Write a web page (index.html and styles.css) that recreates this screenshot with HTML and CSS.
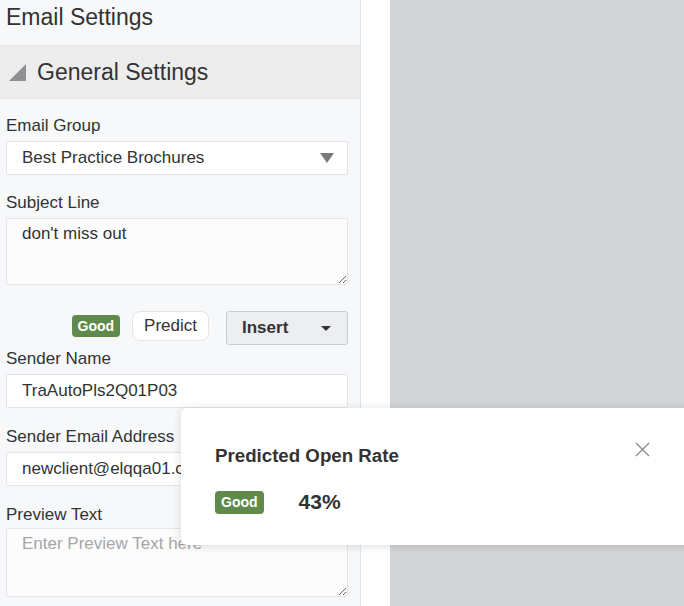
FILE: index.html
```html
<!DOCTYPE html>
<html lang="en">
<head>
    <meta charset="UTF-8">
    <meta name="viewport" content="width=device-width, initial-scale=1.0">
    <title>Email Settings</title>
    <link rel="stylesheet" href="styles.css">
</head>
<body>

<div class="layout">
    <!-- Settings Sidebar -->
    <div class="sidebar">
        <div class="sidebar-title">Email Settings</div>

        <div class="section-head">
            <svg class="section-toggle" width="17" height="17" viewBox="0 0 17 17">
                <polygon points="17,0 17,17 0,17" fill="#8e9095"/>
            </svg>
            <span>General Settings</span>
        </div>

        <div class="form">
            <div class="field">
                <label>Email Group</label>
                <div class="select-box">
                    <span>Best Practice Brochures</span>
                    <svg width="14" height="10" viewBox="0 0 14 10">
                        <polygon points="0,0 14,0 7,10" fill="#7a7a7a"/>
                    </svg>
                </div>
            </div>

            <div class="field field-subject">
                <label>Subject Line</label>
                <textarea class="text-area subject-area">don't miss out</textarea>
            </div>

            <div class="actions">
                <span class="badge">Good</span>
                <button class="predict-btn">Predict</button>
                <button class="insert-btn">
                    <span>Insert</span>
                    <svg width="10" height="5" viewBox="0 0 10 5">
                        <polygon points="0,0 10,0 5,5" fill="#333"/>
                    </svg>
                </button>
            </div>

            <div class="field field-sender">
                <label>Sender Name</label>
                <input class="text-input" type="text" value="TraAutoPls2Q01P03">
            </div>

            <div class="field field-sender">
                <label>Sender Email Address</label>
                <input class="text-input" type="text" value="newclient@elqqa01.com">
            </div>

            <div class="field field-preview">
                <label>Preview Text</label>
                <textarea class="text-area preview-area" placeholder="Enter Preview Text here"></textarea>
            </div>
        </div>
    </div>

    <div class="spacer"></div>
    <div class="canvas"></div>
</div>

<!-- Open rate popover -->
<div class="popover">
    <div class="popover-head">
        <h3>Predicted Open Rate</h3>
        <button class="close-btn" aria-label="Close">
            <svg width="15" height="15" viewBox="0 0 15 15">
                <path d="M1 1 L14 14 M14 1 L1 14" stroke="#8a8a8a" stroke-width="1.3"/>
            </svg>
        </button>
    </div>
    <div class="popover-body">
        <span class="badge badge-lg">Good</span>
        <span class="rate">43%</span>
    </div>
</div>

</body>
</html>
```

FILE: styles.css
```css
/* General Styling */
* {
    box-sizing: border-box;
    margin: 0;
    padding: 0;
    font-family: "Liberation Sans", Arial, sans-serif;
}

body {
    height: 100vh;
    overflow: hidden;
    color: #333;
    background: #d3d4d6;
}

.layout {
    display: flex;
    height: 100vh;
}

/* Sidebar */
.sidebar {
    width: 361px;
    flex-shrink: 0;
    background: #f7f8fa;
    border-right: 1px solid #e2e5ea;
}

.sidebar-title {
    height: 46px;
    padding: 2px 0 0 6px;
    font-size: 23px;
    line-height: 30px;
    color: #333;
    border-bottom: 1px solid #e1e3e7;
}

.section-head {
    height: 53px;
    display: flex;
    align-items: center;
    gap: 11px;
    padding-left: 9px;
    background: #ededee;
    border-bottom: 1px solid #e1e3e7;
    font-size: 23px;
    color: #333;
}

.form {
    padding: 15px 12px 0 6px;
}

.field {
    margin-bottom: 16px;
}

.field-subject {
    margin-bottom: 26px;
}

.field-sender {
    margin-bottom: 17px;
}

label {
    display: block;
    height: 22px;
    padding-top: 1px;
    font-size: 17px;
    line-height: 21px;
    margin-bottom: 5px;
    color: #333;
}

.field-preview label {
    margin-bottom: 3px;
}

.select-box,
.text-input {
    width: 100%;
    height: 34px;
    display: flex;
    align-items: center;
    justify-content: space-between;
    padding: 0 13px 0 15px;
    background: white;
    border: 1px solid #e2e4e8;
    border-radius: 2px;
    font-size: 17px;
    color: #333;
}

.text-input {
    outline: none;
}

.text-area {
    display: block;
    width: 100%;
    padding: 5px 15px;
    background: #fcfcfd;
    border: 1px solid #e2e4e8;
    border-radius: 2px;
    font-size: 17px;
    line-height: 20px;
    color: #333;
    resize: vertical;
    outline: none;
}

.subject-area {
    height: 67px;
}

.preview-area {
    height: 69px;
}

.text-area::placeholder {
    color: #a6a6a6;
}

/* Predict / Insert row */
.actions {
    display: flex;
    justify-content: flex-end;
    align-items: flex-start;
    height: 34px;
    margin-bottom: 2px;
}

.badge {
    display: inline-block;
    height: 22px;
    padding: 0 6px;
    line-height: 22px;
    background: #608a4b;
    color: white;
    font-size: 14px;
    font-weight: bold;
    border-radius: 4px;
}

.actions .badge {
    margin-top: 4px;
    margin-right: 12px;
}

button {
    cursor: pointer;
    font-size: 17px;
    color: #333;
}

.predict-btn {
    height: 30px;
    padding: 0 11px;
    background: white;
    border: 1px solid #e4e4e4;
    border-radius: 8px;
    margin-right: 17px;
}

.insert-btn {
    width: 122px;
    height: 34px;
    display: flex;
    align-items: center;
    justify-content: space-between;
    padding: 0 16px 0 15px;
    background: #eceef1;
    border: 1px solid #c9cdd3;
    border-radius: 3px;
    font-weight: bold;
}

/* Right side */
.spacer {
    width: 29px;
    flex-shrink: 0;
    background: white;
}

.canvas {
    flex: 1;
    background: #d3d4d6;
}

/* Popover */
.popover {
    position: absolute;
    left: 181px;
    top: 408px;
    width: 520px;
    height: 137px;
    padding: 34px 51px 0 34px;
    background: white;
    border-radius: 6px 0 0 6px;
    box-shadow: 0 1px 10px rgba(0, 0, 0, 0.14);
}

.popover-head {
    display: flex;
    justify-content: space-between;
    align-items: flex-start;
}

.popover-head h3 {
    margin-top: 3px;
    font-size: 18.7px;
    line-height: 22px;
    color: #333;
}

.close-btn {
    width: 15px;
    height: 15px;
    background: none;
    border: none;
    display: flex;
}

.popover-body {
    display: flex;
    align-items: center;
    gap: 35px;
    margin-top: 23px;
}

.badge-lg {
    height: 23px;
    line-height: 23px;
}

.rate {
    font-size: 21px;
    font-weight: bold;
    color: #333;
}
```
